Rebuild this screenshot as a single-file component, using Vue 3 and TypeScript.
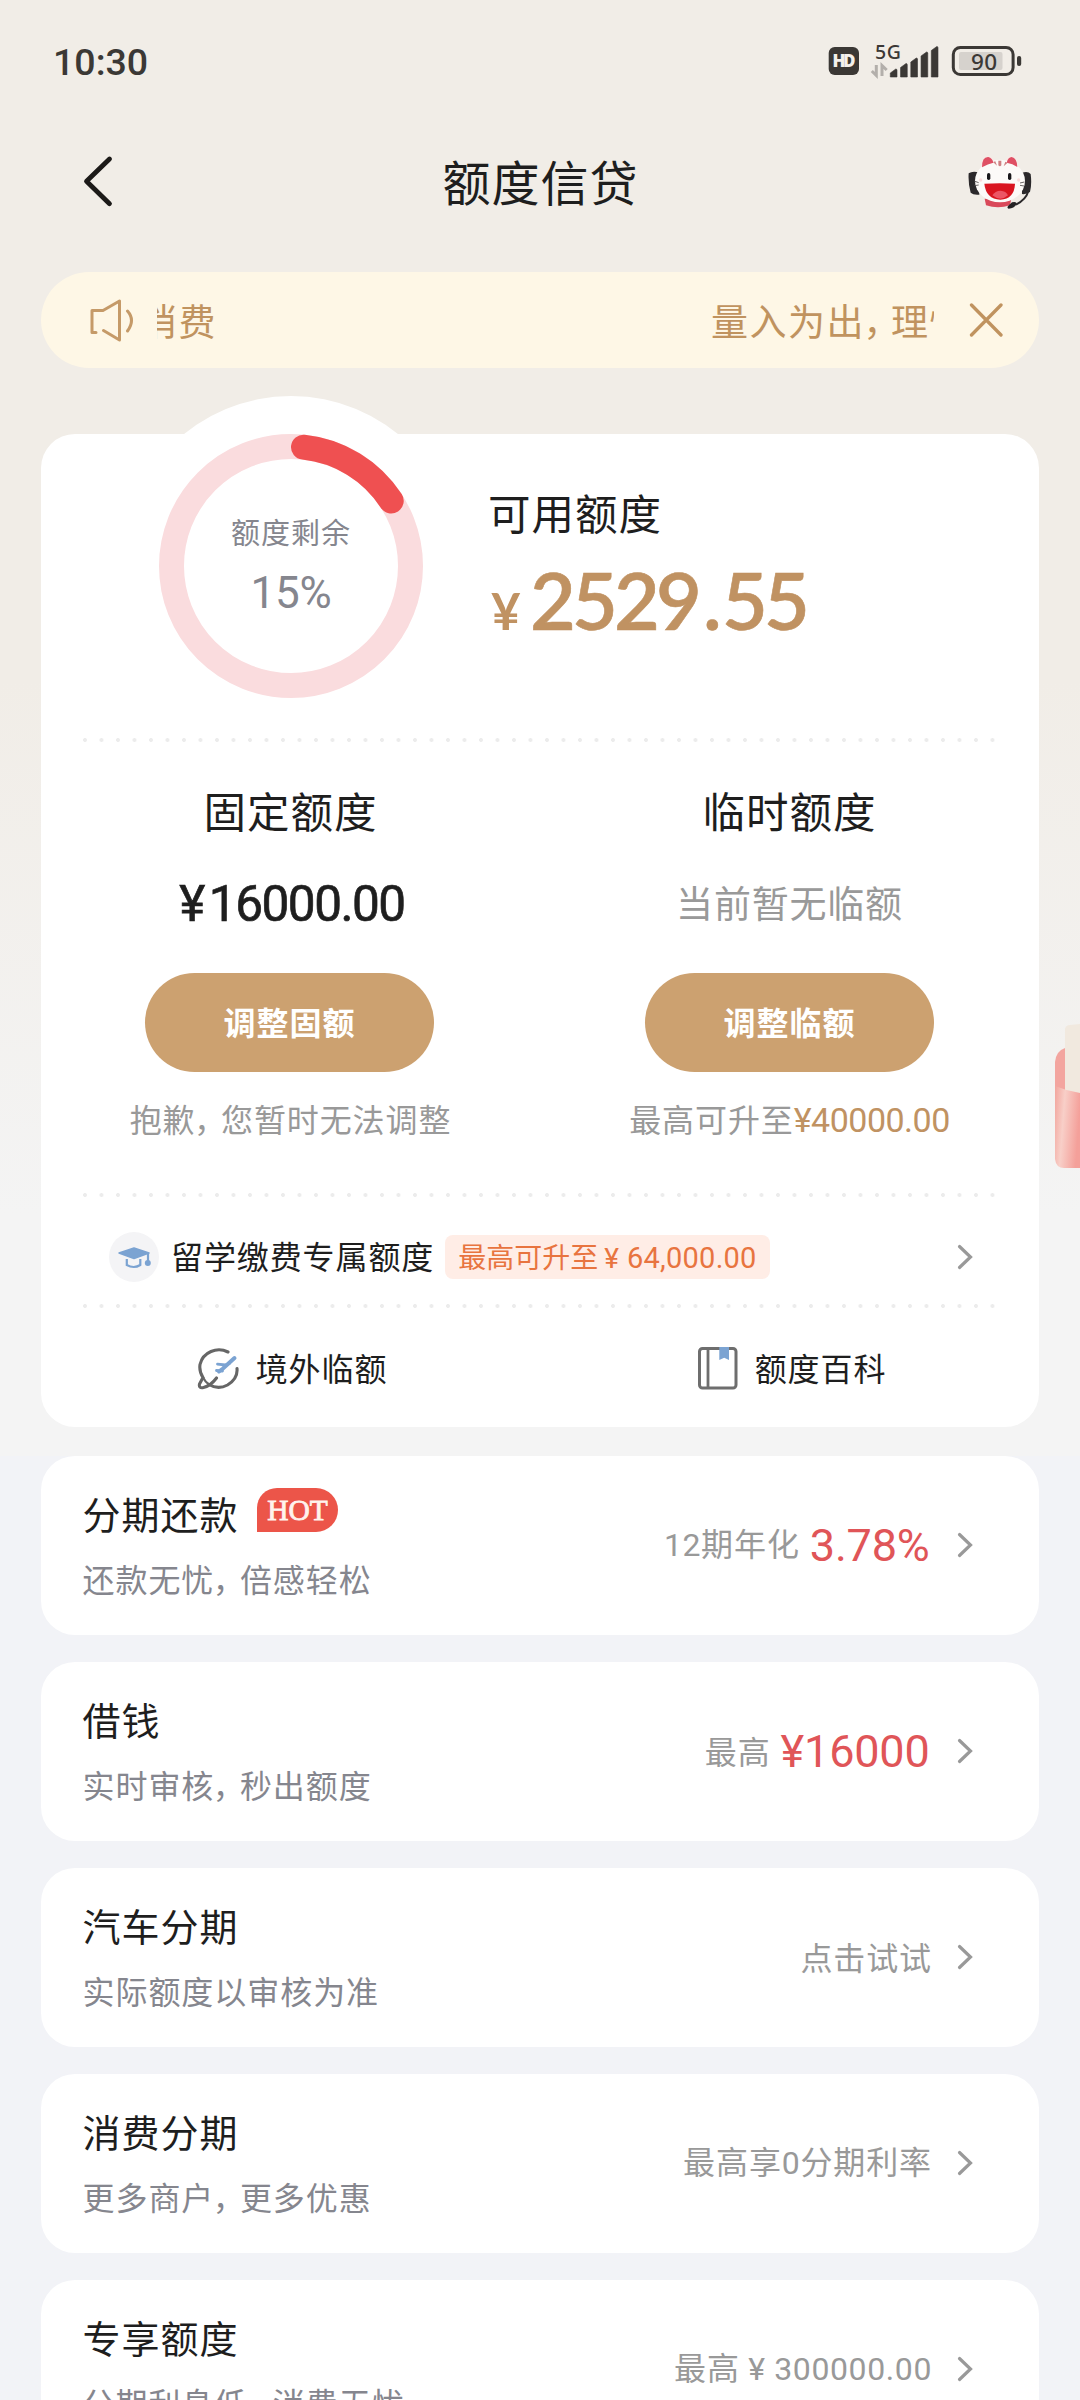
<script setup lang="ts">
interface Product {
  title: string
  sub: string[]
  hot?: boolean
  value?: string
  gray?: string
  grayNum?: string
  grayTail?: string
}

const products: Product[] = [
  { title: '分期还款', sub: ['还款无忧', '倍感轻松'], hot: true, grayNum: '12', grayTail: '期年化', value: '3.78%' },
  { title: '借钱', sub: ['实时审核', '秒出额度'], gray: '最高', value: '¥16000' },
  { title: '汽车分期', sub: ['实际额度以审核为准'], gray: '点击试试' },
  { title: '消费分期', sub: ['更多商户', '更多优惠'], gray: '最高享', grayNum: '0', grayTail: '分期利率' },
  { title: '专享额度', sub: ['分期利息低', '消费无忧'], gray: '最高', grayNum: ' ¥ 300000.00' },
]

const bars = [69, 63.5, 58, 52, 46.5]

const polar = (deg: number, r = 119.5) => {
  const a = (deg * Math.PI) / 180
  return `${(170 + r * Math.sin(a)).toFixed(2)} ${(170 - r * Math.cos(a)).toFixed(2)}`
}
const arc = `M${polar(6)} A119.5 119.5 0 0 1 ${polar(57)}`
</script>

<template>
  <div class="page">
    <div class="status">
      <span class="clock">10:30</span>
      <svg class="sys" width="200" height="60" viewBox="826 31 200 60">
        <rect x="828.7" y="47" width="30.3" height="28" rx="6" fill="#3b3835" />
        <text x="843.9" y="67" text-anchor="middle" class="hd" textLength="23">HD</text>
        <text x="875" y="59.3" class="g5" textLength="26">5G</text>
        <g fill="none" stroke="#b3afab" stroke-width="3">
          <path d="M876.3 65v10.5l-4.5-4.5M882 76V65.500l4.700 4.500" />
        </g>
        <path
          v-for="(t, i) in bars"
          :key="i"
          :d="`M${890.3 + i * 10.25} ${t + 4}l5.5 -4q1.200 0 1.200 1.200V77h-6.700z`"
          fill="#3b3835"
          stroke="#3b3835"
          stroke-width=".6"
        />
        <rect x="953.3" y="47.500" width="59.800" height="27" rx="7" fill="none" stroke="#3b3835" stroke-width="3" />
        <rect x="959" y="52" width="43.500" height="18" rx="2" fill="#d6d2cd" />
        <text x="984" y="70" text-anchor="middle" class="bat" textLength="26">90</text>
        <rect x="1017" y="56" width="4.200" height="10" rx="2" fill="#3b3835" />
      </svg>
    </div>

    <header class="nav">
      <svg class="back" width="40" height="60" viewBox="0 0 40 60">
        <path d="M29.500 7L6.500 29.300l23 22.400" fill="none" stroke="#1c1a18" stroke-width="4.800" stroke-linecap="round" stroke-linejoin="round" />
      </svg>
      <h1>额度信贷</h1>
      <svg class="cat" width="120" height="100" viewBox="0 0 360 300">
        <path d="M86 124q12-8 32-2v66q-18 2-26-6-8-28-6-58zM246 122q18-6 26 4 4 30-2 54-12 8-24 6z" fill="#2b292b" />
        <path d="M134 200h80l-4 20q-36 12-72 0z" fill="#d9495a" />
        <path d="M264 180q-6 22-36 38" fill="none" stroke="#2b292b" stroke-width="6" />
        <path d="M122 108q2-38 24-36 14 4 18 18h30q6-16 20-18 18 2 20 36z" fill="#f8e9e6" />
        <ellipse cx="180" cy="147" rx="75" ry="64" fill="#fcfaf8" />
        <path d="M126 106q0-32 19-31 12 3 15 17-16 3-34 14zM200 92q4-16 15-17 16 3 17 30-14-10-32-13z" fill="#df5064" />
        <path d="M175 86h9v14q-4 6-9 0zM159 90l7-2 5 13zM196 89l7 3-12 11z" fill="#cf8083" />
        <rect x="141" y="123" width="10" height="21" rx="5" fill="#18171a" />
        <rect x="204" y="123" width="10" height="21" rx="5" fill="#18171a" />
        <path d="M133 155q46-3 92 0-2 46-44 48-43-2-48-48z" fill="#d9141f" />
        <path d="M157 190q8-14 25-14 16 1 22 14-22 20-47 0z" fill="#ec5565" />
        <path d="M102 147l14 5M103 161l13-2M240 153l13-3M240 160l12 2" stroke="#4a4647" stroke-width="2.500" />
        <circle cx="122" cy="144" r="5" fill="#f9dcdb" />
        <circle cx="236" cy="144" r="5" fill="#f9dcdb" />
        <path d="M204 222l12-11q14-4 14 5-8 14-24 14-6-2-2-8z" fill="#242224" />
      </svg>
    </header>

    <div class="notice">
      <svg class="speaker" width="46" height="46" viewBox="0 0 46 46" fill="none" stroke="#c59a68" stroke-width="3" stroke-linecap="round" stroke-linejoin="round">
        <path d="M6 35.500H2V13.500h11L29.500 4v39L13.500 33.500" />
        <path d="M37.500 14q8 9 0 20" />
      </svg>
      <div class="marquee"><span class="old">消费</span><span class="new">量入为出<i>，</i>理性</span></div>
      <svg class="close" width="34" height="34" viewBox="0 0 34 34">
        <path d="M2.500 2l29.500 30M32 2L2.500 32" stroke="#c0935f" stroke-width="3.300" stroke-linecap="round" />
      </svg>
    </div>

    <main class="card">
      <section class="summary">
        <div class="gauge">
          <svg width="340" height="340" viewBox="0 0 340 340">
            <circle cx="170" cy="170" r="170" fill="#fff" />
            <circle cx="170" cy="170" r="119.500" fill="none" stroke="#fadcde" stroke-width="25" />
            <path :d="arc" fill="none" stroke="#ef5051" stroke-width="25" stroke-linecap="round" />
          </svg>
          <div class="gauge-text">
            <span class="g-label">额度剩余</span>
            <span class="g-value">15%</span>
          </div>
        </div>
        <div class="avail">
          <div class="h2">可用额度</div>
          <div class="amount"><span class="yen">¥</span><span class="big">2529<span class="point">.</span>55</span></div>
        </div>
      </section>
      <div class="dots"></div>
      <section class="columns">
        <div class="col">
          <div class="h2">固定额度</div>
          <div class="fixed"><span>¥</span>16000.00</div>
          <button>调整固额</button>
          <div class="hint">抱歉<i>，</i>您暂时无法调整</div>
        </div>
        <div class="col">
          <div class="h2">临时额度</div>
          <div class="none">当前暂无临额</div>
          <button>调整临额</button>
          <div class="hint">最高可升至<span class="num gold">¥40000.00</span></div>
        </div>
      </section>
      <div class="dots"></div>
      <section class="study">
        <svg class="cap" width="50" height="50" viewBox="0 0 50 50">
          <circle cx="25" cy="25" r="25" fill="#f4f4f6" />
          <path d="M25 16l15 5-15 5.500-15-5.500z" fill="#7ba3d2" stroke="#7ba3d2" stroke-width="1.500" stroke-linejoin="round" />
          <path d="M17.800 27v6q7 4 13.500 0V27M39 21v9" fill="none" stroke="#7ba3d2" stroke-width="2.200" />
          <circle cx="38.800" cy="31" r="3" fill="#7ba3d2" />
        </svg>
        <span class="label">留学缴费专属额度</span>
        <span class="tag">最高可升至<span class="num n1">¥</span><span class="num n2">64,000.00</span></span>
        <svg class="chev" width="17" height="26" viewBox="0 0 17 26"><path d="M2.500 2.500L13.500 13l-11 10.500" /></svg>
      </section>
      <div class="dots"></div>
      <section class="links">
        <div class="link">
          <svg width="42" height="44" viewBox="0 0 42 44" fill="none" stroke-linecap="round">
            <path d="M31 6C20 .5 6 6 3 18.500q-1 7 3 13l-3.500 6.500q-1 4.500 4 3.500 7-1.500 13-9.500M12 38.500q9 5.500 18.500 .5Q41 32.500 40 22.500" stroke="#666" stroke-width="3.100" />
            <path d="M6 31.500q2 4 6 7" stroke="#666" stroke-width="2.200" />
            <path d="M37.500 12L26 22.500l-4 3" stroke="#7ba3d2" stroke-width="4" />
            <path d="M20.500 18.200l8 .8 4-1.500M19.500 24.500l6 .5" stroke="#7ba3d2" stroke-width="2.800" stroke-linejoin="round" />
          </svg>
          <span class="label">境外临额</span>
        </div>
        <div class="link">
          <svg width="42" height="44" viewBox="0 0 42 44" fill="none">
            <rect x="3.500" y="2.500" width="36.500" height="39.500" rx="3" stroke="#6e6e6e" stroke-width="3" />
            <path d="M12 2.500V42" stroke="#6e6e6e" stroke-width="2.800" />
            <path d="M23.300 1h9.700v13l-4.800-2.300-4.900 2.300z" fill="#7ba3d2" />
          </svg>
          <span class="label">额度百科</span>
        </div>
      </section>
    </main>

    <div class="list">
      <article v-for="p in products" :key="p.title" class="item">
        <div class="left">
          <div class="title">{{ p.title }}<span v-if="p.hot" class="hot">HOT</span></div>
          <div class="sub">{{ p.sub[0] }}<template v-if="p.sub[1]"><i>，</i>{{ p.sub[1] }}</template></div>
        </div>
        <div class="right">
          <span class="gray">{{ p.gray }}<span v-if="p.grayNum" class="num">{{ p.grayNum }}</span>{{ p.grayTail }}</span>
          <span v-if="p.value" class="red">{{ p.value }}</span>
          <svg class="chev" width="17" height="26" viewBox="0 0 17 26"><path d="M2.500 2.500L13.500 13l-11 10.500" /></svg>
        </div>
      </article>
    </div>

    <svg class="float" width="25" height="145" viewBox="0 0 25 145">
      <defs>
        <linearGradient id="fr" x1="0" x2="1" y1="0" y2=".25">
          <stop offset="0" stop-color="#f2a59d" />
          <stop offset=".4" stop-color="#f8cfc8" />
          <stop offset="1" stop-color="#f4a09a" />
        </linearGradient>
      </defs>
      <path d="M0 75V38q1-11 10-14h15v60z" fill="#f3a59f" />
      <path d="M10 70V5q1-4 5-4l10-1v80z" fill="#f1e9df" />
      <path d="M0 62q12 5 25 7v75H9q-8 0-9-9z" fill="url(#fr)" />
    </svg>
  </div>
</template>

<style>
html,
body {
  margin: 0;
  background: #f2f3f7;
}
</style>

<style scoped>
.page {
  position: relative;
  width: 1080px;
  height: 2400px;
  overflow: hidden;
  font-family: 'Noto Sans CJK SC', sans-serif;
  color: #1e1e1e;
  background: linear-gradient(#f1ede7 0, #f1ede7 680px, #f4f4f4 1215px, #f4f4f4 1456px, #f2f3f7 1456px);
}
i {
  font-style: normal;
  font-feature-settings: 'halt';
  margin: 0 0.32em 0 -0.05em;
}
svg {
  display: block;
  flex: none;
}
.num {
  font-family: Roboto, sans-serif;
}
.status {
  display: flex;
  justify-content: space-between;
  height: 122px;
  padding: 31px 54px 0 53px;
  box-sizing: border-box;
}
.clock {
  margin-top: 11px;
  font: 500 37.500px/41px Roboto, sans-serif;
  color: #3b3835;
}
.hd {
  font: 800 17px 'Open Sans', sans-serif;
  fill: #f4f0eb;
}
.g5 {
  font: 500 19.500px 'Noto Sans', sans-serif;
  fill: #3b3835;
}
.bat {
  font: 500 22.500px 'Noto Sans', sans-serif;
  fill: #3b3835;
}
.nav {
  display: flex;
  align-items: center;
  height: 120px;
  padding: 0 20px 0 80px;
}
h1 {
  flex: 1;
  margin: 0 0 5px 21px;
  text-align: center;
  font-size: 48px;
  line-height: 70px;
  font-weight: 400;
  letter-spacing: 1px;
}
.notice {
  display: flex;
  align-items: center;
  height: 96px;
  margin: 30px 41px 0;
  padding: 0 36px 0 49px;
  box-sizing: border-box;
  border-radius: 48px;
  background: #fef7e6;
  color: #c0935f;
}
.marquee {
  display: flex;
  justify-content: space-between;
  width: 777px;
  margin-left: 21px;
  overflow: hidden;
  white-space: nowrap;
  font-size: 37px;
  line-height: 60px;
  letter-spacing: 1.500px;
}
.marquee i {
  margin-right: 0.21em;
}
.old {
  margin-left: -17px;
}
.new {
  margin-right: -34px;
}
.close {
  margin-left: 35px;
}
.card {
  height: 993px;
  margin: 66px 41px 0;
  border-radius: 34px;
  background: #fff;
}
.summary {
  display: flex;
  height: 304px;
}
.gauge {
  position: relative;
  width: 340px;
  height: 340px;
  margin: -38px 0 0 80px;
}
.gauge-text {
  position: absolute;
  inset: 114px 0 0;
  display: flex;
  flex-direction: column;
  align-items: center;
  color: #85868e;
}
.g-label {
  font-size: 29px;
  line-height: 42px;
  letter-spacing: 1px;
}
.g-value {
  margin-top: 16px;
  font: 400 44px/50px Roboto, sans-serif;
  letter-spacing: -0.300px;
}
.avail {
  margin: 47px 0 0 27px;
}
.h2 {
  font-size: 42.500px;
  line-height: 62px;
  letter-spacing: 1px;
}
.amount {
  display: flex;
  align-items: baseline;
  margin-top: 9px;
  line-height: 96px;
  color: #c09262;
}
.yen {
  width: 39px;
  margin-left: 3px;
  font-family: Lato, sans-serif;
  font-size: 51px;
  font-weight: 700;
}
.big {
  font-family: Lato, sans-serif;
  font-size: 79px;
  font-weight: 600;
  letter-spacing: -3.800px;
  -webkit-text-stroke: 0.600px #c09262;
}
.point {
  margin: 0 4px 0 5px;
}
.dots {
  height: 4px;
  margin: 0 43px 0 42px;
  background: radial-gradient(circle at 2px 2px, #ececec 1.600px, transparent 2.300px) 0 0 / 16.500px 4px repeat-x;
}
.columns {
  display: flex;
  height: 451px;
}
.col {
  display: flex;
  flex-direction: column;
  align-items: center;
  width: 499px;
  padding-top: 37px;
  box-sizing: border-box;
}
.fixed,
.none {
  height: 60px;
  margin-top: 31px;
  line-height: 60px;
}
.fixed {
  margin: 33px 0 -2px 3px;
  font-family: Roboto, sans-serif;
  font-size: 49.500px;
  font-weight: 400;
  letter-spacing: -1.500px;
  -webkit-text-stroke: 0.700px #1e1e1e;
}
.fixed span {
  margin-right: 5px;
}
.none {
  font-size: 37px;
  letter-spacing: 0.800px;
  color: #999;
}
button {
  width: 289px;
  height: 99px;
  margin: 41px 0 0;
  padding: 0 0 3px;
  border: 0;
  border-radius: 50px;
  background: #cca170;
  color: #fff;
  font: 700 32px 'Noto Sans CJK SC', sans-serif;
  letter-spacing: 1px;
}
.col:first-child button {
  margin-right: 2px;
}
.hint {
  margin-top: 22px;
  font-size: 32px;
  line-height: 48px;
  letter-spacing: 0.900px;
  color: #999;
}
.gold {
  font-size: 34px;
  letter-spacing: -0.500px;
  color: #c09262;
}
.study {
  display: flex;
  align-items: center;
  height: 107px;
  padding: 12px 65px 0 68px;
  box-sizing: border-box;
}
.study .label {
  margin-left: 12px;
}
.label {
  padding-bottom: 3px;
  font-size: 32px;
  line-height: 46px;
  letter-spacing: 0.900px;
}
.tag {
  width: 325px;
  height: 44px;
  margin: 0 auto 0 11px;
  padding-left: 13px;
  box-sizing: border-box;
  border-radius: 8px;
  background: #ffede6;
  color: #e8743f;
  font-size: 28px;
  line-height: 42px;
  white-space: nowrap;
}
.n1 {
  margin-left: 6px;
}
.n2 {
  margin-left: 8px;
  font-size: 29px;
  letter-spacing: 0.250px;
}
.chev {
  fill: none;
  stroke: #999;
  stroke-width: 3.200px;
  stroke-linecap: round;
}
.links {
  display: flex;
}
.link {
  display: flex;
  align-items: center;
  justify-content: center;
  width: 499px;
  height: 120px;
  padding-left: 3px;
  box-sizing: border-box;
}
.link .label {
  margin-left: 17px;
}
.list {
  display: flex;
  flex-direction: column;
  gap: 27px;
  padding: 29px 41px 0;
}
.item {
  display: flex;
  justify-content: space-between;
  height: 179px;
  padding: 0 65px 0 41.500px;
  box-sizing: border-box;
  border-radius: 34px;
  background: #fff;
}
.left {
  padding-top: 29px;
}
.title {
  display: flex;
  height: 60px;
  font-size: 38px;
  line-height: 55px;
  letter-spacing: 1px;
}
.hot {
  width: 81px;
  height: 44px;
  margin: 3px 0 0 18.500px;
  border-radius: 20px 22px 22px 0;
  background: #ec5549;
  color: #fff3ee;
  text-align: center;
  font: 400 29.500px/44px 'Liberation Serif', serif;
  letter-spacing: 0;
  -webkit-text-stroke: 0.800px #fff3ee;
}
.sub {
  margin-top: 9px;
  font-size: 32px;
  line-height: 49px;
  letter-spacing: 0.950px;
  color: #85868e;
}
.right {
  display: flex;
  align-items: center;
  white-space: pre;
}
.gray {
  padding-bottom: 4px;
  font-size: 32px;
  line-height: 48px;
  letter-spacing: 0.900px;
  color: #999;
}
.gray .num {
  letter-spacing: 0.600px;
}
.red {
  margin: 0 2.500px 0 10px;
  font: 400 45px/50px Roboto, sans-serif;
  letter-spacing: -0.200px;
  color: #e05558;
}
.right .chev {
  margin: 0 0 2px 25px;
}
.float {
  position: absolute;
  right: 0;
  top: 1024px;
}
</style>
